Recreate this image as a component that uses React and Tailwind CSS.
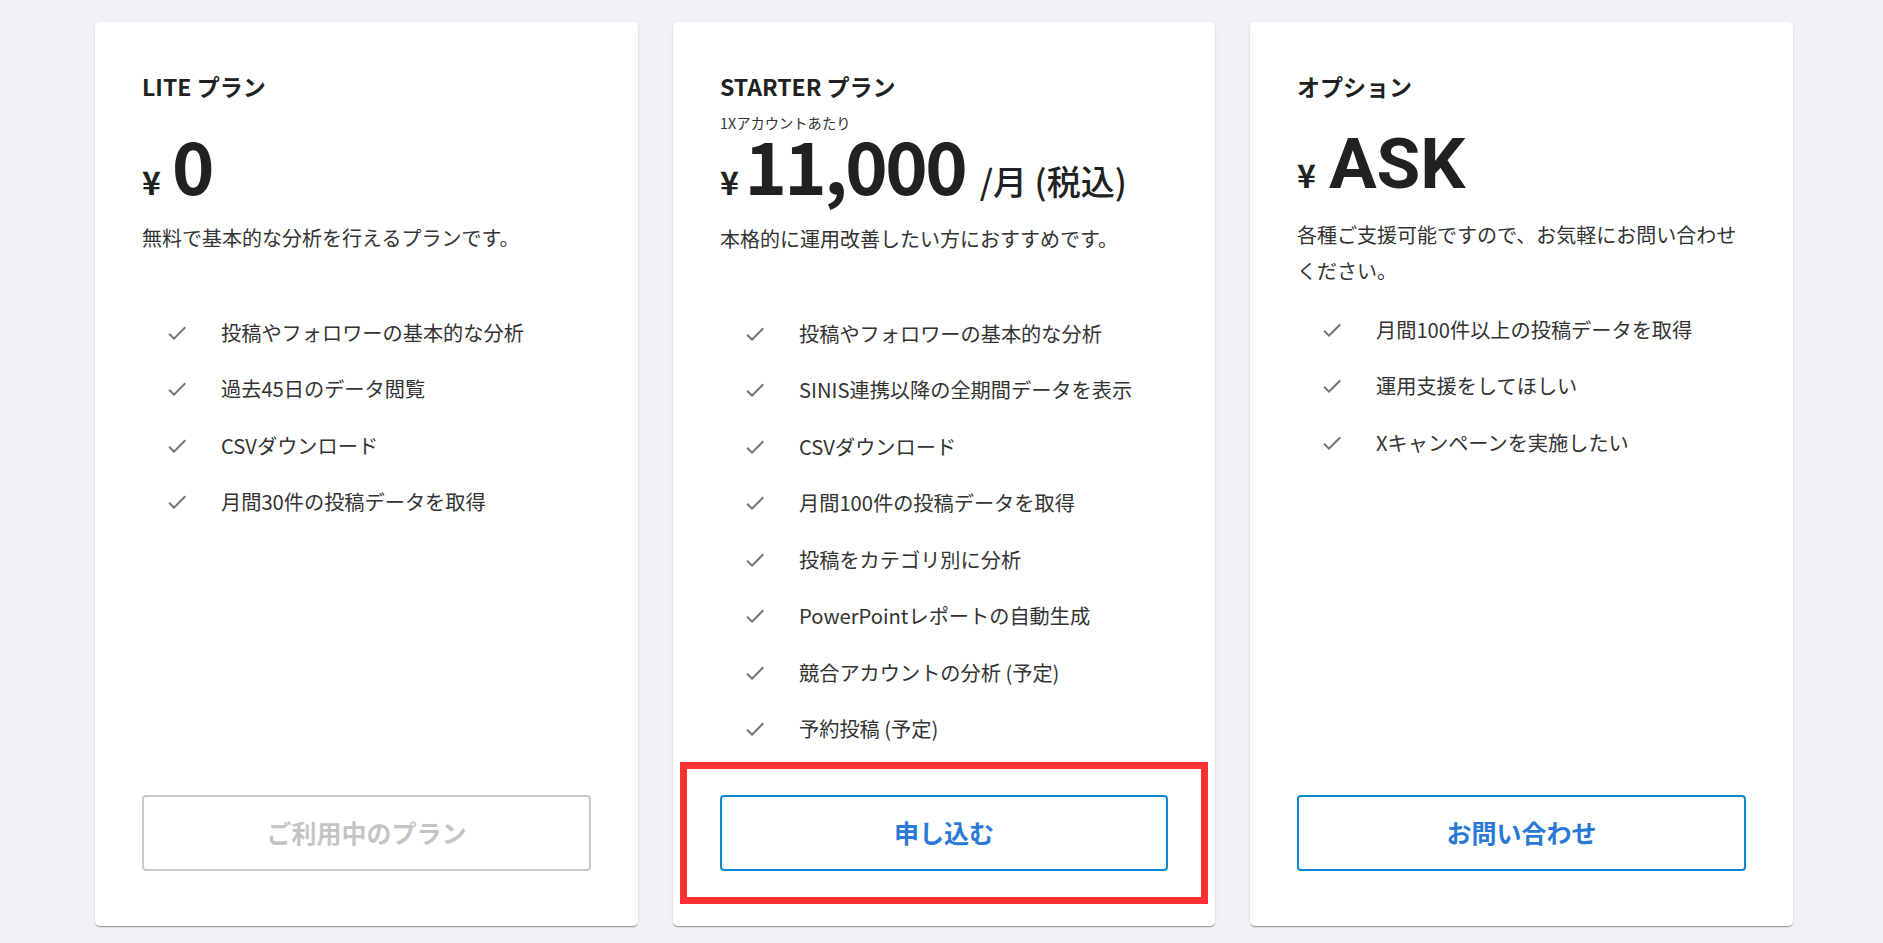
const plans = [
  {
    title: 'LITE プラン',
    note: '',
    price: '0',
    yenGap: 'mr-[11px]',
    priceClass: "font-['Noto_Sans_CJK_JP',sans-serif] text-[72px] leading-[60px] font-bold tracking-[-2.5px]",
    suffix: '',
    desc: '無料で基本的な分析を行えるプランです。',
    features: [
      '投稿やフォロワーの基本的な分析',
      '過去45日のデータ閲覧',
      'CSVダウンロード',
      '月間30件の投稿データを取得',
    ],
    button: 'ご利用中のプラン',
    disabled: true,
  },
  {
    title: 'STARTER プラン',
    note: '1Xアカウントあたり',
    price: '11,000',
    yenGap: 'mr-[5.5px]',
    priceClass: "font-['Noto_Sans_CJK_JP',sans-serif] text-[72px] leading-[60px] font-bold tracking-[-2.5px]",
    suffix: '/月 (税込)',
    desc: '本格的に運用改善したい方におすすめです。',
    features: [
      '投稿やフォロワーの基本的な分析',
      'SINIS連携以降の全期間データを表示',
      'CSVダウンロード',
      '月間100件の投稿データを取得',
      '投稿をカテゴリ別に分析',
      'PowerPointレポートの自動生成',
      '競合アカウントの分析 (予定)',
      '予約投稿 (予定)',
    ],
    button: '申し込む',
    highlight: true,
  },
  {
    title: 'オプション',
    note: '',
    price: 'ASK',
    yenGap: 'mr-[13px]',
    priceClass: "font-['Roboto',sans-serif] text-[71px] leading-[60px] font-bold",
    suffix: '',
    desc: '各種ご支援可能ですので、お気軽にお問い合わせください。',
    features: ['月間100件以上の投稿データを取得', '運用支援をしてほしい', 'Xキャンペーンを実施したい'],
    button: 'お問い合わせ',
  },
]

function CheckIcon() {
  return (
    <svg viewBox="0 0 24 24" width="24" height="24" className="fill-[#757575]">
      <path d="M9 16.17 4.83 12l-1.42 1.41L9 19 21 7l-1.41-1.41z" />
    </svg>
  )
}

function PlanCard({ plan }) {
  return (
    <div className="flex flex-col rounded-[5px] bg-white px-[47px] pt-[48px] pb-[55px] shadow-[0_2px_1px_-1px_rgba(0,0,0,0.2),0_1px_1px_0_rgba(0,0,0,0.14),0_1px_3px_0_rgba(0,0,0,0.12)]">
      <h2 className="text-[23px] leading-[33px] font-bold text-[#212121]">{plan.title}</h2>
      <p className="mt-[13px] h-[13px] text-[14.3px] leading-[13px] text-[#333]">{plan.note}</p>
      <div className="mt-[5px] flex items-baseline text-[#212121]">
        <span className={`${plan.yenGap} text-[32px] leading-none font-bold`}>¥</span>
        <span className={plan.priceClass}>{plan.price}</span>
        {plan.suffix && <span className="ml-[14.5px] text-[34px] leading-none font-medium">{plan.suffix}</span>}
      </div>
      <p className="mt-[22.5px] h-[72px] text-[20px] leading-[36px] text-[#333]">{plan.desc}</p>
      <ul className="mt-[13px]">
        {plan.features.map((f) => (
          <li key={f} className="flex h-[56.5px] items-center pl-[23px]">
            <span className="w-[56px] shrink-0">
              <CheckIcon />
            </span>
            <span className="text-[20.2px] text-[#333]">{f}</span>
          </li>
        ))}
      </ul>
      <div className="mt-auto pt-[37px]">
        <div className="relative">
          {plan.highlight && (
            <div className="pointer-events-none absolute -inset-x-[40px] -inset-y-[33px] border-[7px] border-[#fe3232]" />
          )}
          <button
            className={
              plan.disabled
                ? 'flex h-[76px] w-full items-center justify-center rounded-[4px] border-2 border-[#cacaca] text-[25px] font-bold text-[#c4c4c4]'
                : 'flex h-[76px] w-full items-center justify-center rounded-[4px] border-2 border-[#0b8acf] text-[25px] font-bold text-[#2a79d6]'
            }
          >
            {plan.button}
          </button>
        </div>
      </div>
    </div>
  )
}

export default function App() {
  return (
    <div className="min-h-screen bg-[#f0f2f5] pt-[22px] pb-[17px] pl-[95px] font-['Noto_Sans_CJK_JP','Noto_Sans',sans-serif]">
      <div className="grid grid-cols-[543px_542px_543px] gap-[35px]">
        {plans.map((p) => (
          <PlanCard key={p.title} plan={p} />
        ))}
      </div>
    </div>
  )
}
